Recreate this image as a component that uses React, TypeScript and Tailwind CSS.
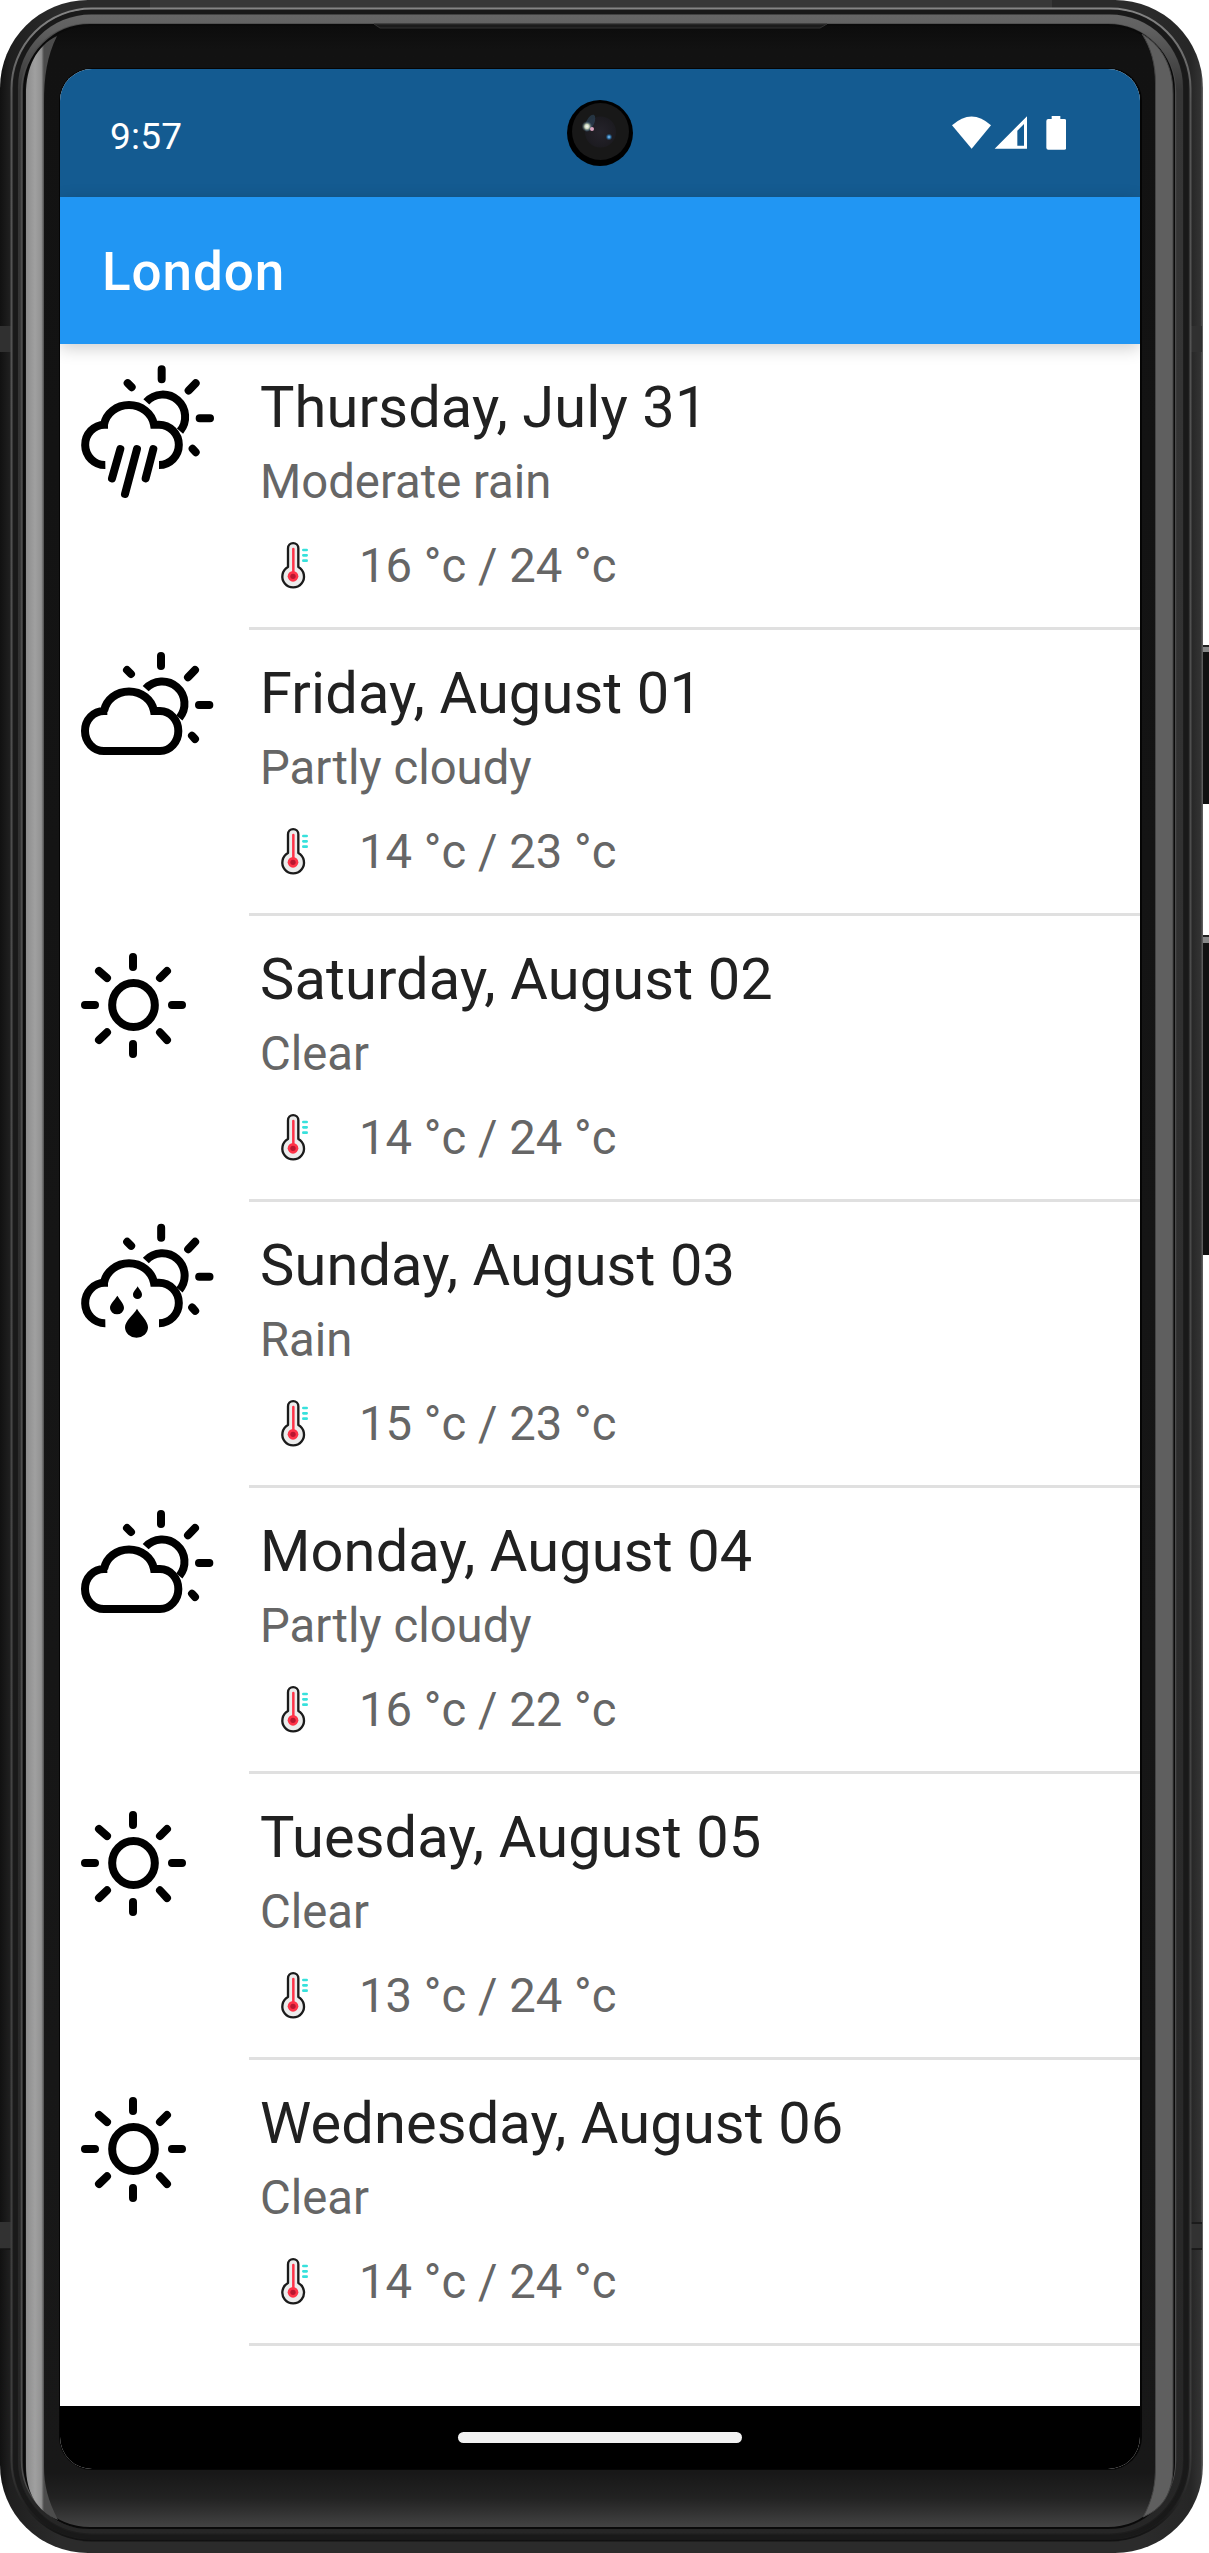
import React from "react";

type Kind = "rain-sun" | "cloudy" | "clear" | "drops";

const days: { day: string; text: string; temp: string; kind: Kind }[] = [
  { day: "Thursday, July 31", text: "Moderate rain", temp: "16 °c / 24 °c", kind: "rain-sun" },
  { day: "Friday, August 01", text: "Partly cloudy", temp: "14 °c / 23 °c", kind: "cloudy" },
  { day: "Saturday, August 02", text: "Clear", temp: "14 °c / 24 °c", kind: "clear" },
  { day: "Sunday, August 03", text: "Rain", temp: "15 °c / 23 °c", kind: "drops" },
  { day: "Monday, August 04", text: "Partly cloudy", temp: "16 °c / 22 °c", kind: "cloudy" },
  { day: "Tuesday, August 05", text: "Clear", temp: "13 °c / 24 °c", kind: "clear" },
  { day: "Wednesday, August 06", text: "Clear", temp: "14 °c / 24 °c", kind: "clear" },
];

function SunBehind() {
  return (
    <>
      <path d="M257 176A67 67 0 0 1 358 264" />
      <g strokeLinecap="round" strokeWidth="24">
        <path d="M303 78V108M384 142L405 120M417 225H448M201 120L213 132M396 317L405 327" />
      </g>
    </>
  );
}

function WeatherIcon({ kind }: { kind: Kind }) {
  if (kind === "clear")
    return (
      <svg className="block h-[150px] w-[150px] shrink-0" viewBox="0 -42 450 450" fill="none" stroke="#000" strokeWidth="24">
        <ellipse cx="220.500" cy="225" rx="64" ry="66" />
        <path
          strokeLinecap="round"
          d="M219 81V111M219 342V372M75 225H105M336 225H366M117 123L141 144M321 123L300 144M117 330L141 307M300 307L321 330"
        />
      </svg>
    );
  if (kind === "cloudy")
    return (
      <svg className="block h-[150px] w-[150px] shrink-0" viewBox="0 0 450 450" overflow="visible" fill="none" stroke="#000" strokeWidth="24">
        <SunBehind />
        <path d="M142 243H132A57 60 0 0 0 132 363H300A55 60 0 0 0 300 243H282A76 70 0 0 0 132 243" />
      </svg>
    );
  return (
    <svg
      className="block h-[150px] w-[150px] shrink-0"
      viewBox={kind === "drops" ? "0 6 450 450" : "0 12 450 450"}
      overflow="visible"
      fill="none"
      stroke="#000"
      strokeWidth="24"
    >
      <g transform={kind === "drops" ? "translate(0 5.500)" : "translate(0 11)"}>
        <g transform={kind === "drops" ? "translate(0.500 0)" : "translate(2 -1.500)"}>
          <SunBehind />
        </g>
        <path d="M144 243H134A59 60 0 0 0 136 364" />
        <path d="M132 243A76 70 0 0 1 282 243H297A59 60 0 0 1 297 364" />
      </g>
      {kind === "drops" ? (
        <g fill="#000" stroke="none">
          <path d="M172 287C164 300 150 312 150 324A21 19 0 0 0 192 324C192 312 180 300 172 287Z" />
          <path d="M233 259C228 269 219 275 219 284A13.500 13 0 0 0 246 284C246 275 238 269 233 259Z" />
          <path d="M231 326C220 346 195 362 195 382A34.500 31 0 0 0 264 382C264 362 242 346 231 326Z" />
        </g>
      ) : (
        <path strokeLinecap="round" d="M181 327L156 415M231 327L195 462M280 327L257 415" />
      )}
    </svg>
  );
}

function Thermometer() {
  return (
    <svg className="block h-[48px] w-[30px] shrink-0" viewBox="0 0 90 144" fill="none">
      <path
        d="M24 78V22A15.500 15.500 0 0 1 55 22V78A32.500 32.500 0 1 1 24 78Z"
        fill="#ececec"
        stroke="#1b1b1b"
        strokeWidth="7"
        strokeLinejoin="round"
      />
      <path d="M40 24V100" stroke="#ff3348" strokeWidth="7.500" strokeLinecap="round" />
      <circle cx="39" cy="106" r="16" fill="#ff3348" />
      <circle cx="39" cy="106" r="8" fill="#b9162f" />
      <path d="M70 27H80M70 43H80M70 59H80" stroke="#37e1dc" strokeWidth="8" strokeLinecap="round" />
    </svg>
  );
}

function Bezel() {
  return (
    <svg className="absolute inset-0 h-full w-full" viewBox="0 0 1209 2553" fill="none">
      <defs>
        <linearGradient id="body" x1="0" x2="1203" y1="0" y2="0" gradientUnits="userSpaceOnUse">
          <stop offset="0" stopColor="#111" />
          <stop offset=".008" stopColor="#1f1f1f" />
          <stop offset=".05" stopColor="#2b2b2b" />
          <stop offset=".95" stopColor="#2b2b2b" />
          <stop offset=".99" stopColor="#262626" />
          <stop offset=".998" stopColor="#333" />
          <stop offset="1" stopColor="#666" />
        </linearGradient>
        <linearGradient id="rim" x1="0" x2="0" y1="0" y2="2553" gradientUnits="userSpaceOnUse">
          <stop offset="0" stopColor="#8a8a8a" />
          <stop offset=".04" stopColor="#555" />
          <stop offset=".96" stopColor="#3c3c3c" />
          <stop offset="1" stopColor="#0c0c0c" />
        </linearGradient>
        <linearGradient id="inner" x1="0" x2="0" y1="14" y2="2553" gradientUnits="userSpaceOnUse">
          <stop offset="0" stopColor="#666" />
          <stop offset=".006" stopColor="#606060" />
          <stop offset=".03" stopColor="#363636" />
          <stop offset="1" stopColor="#262626" />
        </linearGradient>
        <linearGradient id="glass" x1="0" x2="0" y1="25" y2="2528" gradientUnits="userSpaceOnUse">
          <stop offset="0" stopColor="#0c0c0c" />
          <stop offset=".01" stopColor="#121212" />
          <stop offset=".978" stopColor="#181818" />
          <stop offset=".988" stopColor="#222" />
          <stop offset="1" stopColor="#444" />
        </linearGradient>
        <linearGradient id="leftBand" x1="26" x2="44" y1="0" y2="0" gradientUnits="userSpaceOnUse">
          <stop offset="0" stopColor="#8c8c8c" />
          <stop offset=".5" stopColor="#a0a0a0" />
          <stop offset=".85" stopColor="#929292" />
          <stop offset="1" stopColor="#4c4c4c" />
        </linearGradient>
      </defs>
      <rect x="1196" y="645" width="20" height="159" rx="2" fill="#111" />
      <rect x="1202" y="646" width="7" height="6" fill="#888" />
      <rect x="1202" y="645" width="7" height="2" fill="#222" />
      <rect x="1196" y="935" width="20" height="320" rx="2" fill="#111" />
      <rect x="1202" y="937" width="7" height="6" fill="#888" />
      <rect x="1202" y="935" width="7" height="2" fill="#222" />
      <rect width="1203" height="2553" rx="88" fill="url(#body)" />
      <path d="M150 0H1052V10H150Z" fill="#383838" />
      <path d="M0 326H11V352H0ZM1190 326H1202V352H1190Z" fill="#303030" />
      <path d="M0 2222H11V2249H0ZM1190 2222H1202V2249H1190Z" fill="#323232" />
      <path d="M0 2249H11M1190 2223H1202M1190 2249H1202" stroke="#151515" strokeWidth="1.500" />
      <rect x="11.500" y="8.500" width="1179" height="2532" rx="80" fill="#1d1d1d" stroke="url(#rim)" strokeWidth="2" />
      <rect x="15.500" y="12" width="1170.500" height="2525" rx="76" stroke="#191919" strokeWidth="4" />
      <rect x="18" y="14.500" width="1165" height="2519" rx="73" fill="url(#inner)" />
      <rect x="21.500" y="24" width="1154" height="2504" rx="68" fill="none" stroke="#4c4c4c" strokeWidth="1.500" />
      <rect x="24" y="25" width="1150" height="2503" rx="66" fill="url(#glass)" stroke="#0a0a0a" strokeWidth="2" />
      <path d="M374 24L380 28H820L827 24Z" fill="#1b1b1b" stroke="#333" strokeWidth="1" />
      <path d="M57 36C36 46 26 68 26 94V2466C26 2493 37 2511 58 2520C48 2500 44 2486 44 2466V104C44 76 47 56 57 36Z" fill="url(#leftBand)" />
      <path d="M1142 34C1162 46 1173 66 1173 94V2466C1173 2494 1162 2509 1143 2517C1153 2499 1155.500 2484 1155.500 2466V84C1155.500 64 1151 48 1142 34Z" fill="#5f5f5f" stroke="#444" strokeWidth="1" />
      <rect x="59" y="68" width="1083" height="2402" rx="33" fill="#050505" />
    </svg>
  );
}

function Camera() {
  return (
    <svg className="absolute left-[507px] top-[31px] h-[66px] w-[66px]" viewBox="0 0 66 66">
      <defs>
        <radialGradient id="lens">
          <stop offset="0" stopColor="#25232b" />
          <stop offset="1" stopColor="#1c1b20" />
        </radialGradient>
        <radialGradient id="glow">
          <stop offset="0" stopColor="#fff" />
          <stop offset=".4" stopColor="#c9d5b8" />
          <stop offset="1" stopColor="#31506a" stopOpacity="0" />
        </radialGradient>
        <radialGradient id="blueGlow">
          <stop offset="0" stopColor="#8fd0ff" />
          <stop offset=".4" stopColor="#3a83bd" />
          <stop offset="1" stopColor="#1f4b73" stopOpacity="0" />
        </radialGradient>
      </defs>
      <circle cx="33" cy="33" r="33" fill="#000" />
      <circle cx="33.500" cy="31.500" r="28.500" fill="#181818" />
      <circle cx="33.500" cy="32" r="15.500" fill="url(#lens)" />
      <ellipse cx="23" cy="23" rx="4" ry="9" fill="#31506a" opacity=".5" transform="rotate(25 23 23)" />
      <circle cx="20" cy="26.500" r="5.500" fill="url(#glow)" />
      <circle cx="25" cy="29" r="2" fill="#d9a5c0" />
      <circle cx="42" cy="37" r="3.500" fill="url(#blueGlow)" />
    </svg>
  );
}

export default function App() {
  return (
    <div className="relative h-[2553px] w-[1209px] overflow-hidden bg-white pl-[60px] pt-[69px] font-[Roboto,sans-serif]">
      <Bezel />
      <div className="relative flex h-[2400px] w-[1080px] flex-col overflow-hidden rounded-[32px] bg-white">
        <header className="relative flex h-[128px] shrink-0 items-center justify-between bg-[#145b91] pl-[50px] pr-[74px] text-white">
          <span className="mt-[6px] text-[37px] leading-none tracking-[0.2px]">9:57</span>
          <Camera />
          <svg className="h-[36px] w-[117px]" viewBox="0 0 351 108" fill="#fff">
            <path d="M9 31Q68 -22 126 31L68 101Z" />
            <path fillRule="evenodd" d="M137 101L234 4V101ZM205 47V92H225V27Z" />
            <path d="M308 3H334V12H346Q352 12 352 18V98Q352 104 346 104H298Q292 104 292 98V18Q292 12 298 12H308Z" />
          </svg>
        </header>
        <div className="relative z-10 flex h-[147px] shrink-0 items-center bg-[#2196f3] pl-[42px] pt-[4px] shadow-[0_4px_16px_rgba(0,0,0,0.2)]">
          <h1 className="text-[53px] font-medium leading-none tracking-[0.9px] text-white">London</h1>
        </div>
        <main className="flex-1">
          {days.map((d) => (
            <section key={d.day} className="flex h-[286px]">
              <WeatherIcon kind={d.kind} />
              <div className="ml-[39px] flex flex-1 flex-col border-b-[3px] border-[#e0e0e0] pl-[11px] pt-[28px]">
                <h2 className="whitespace-nowrap text-[57.75px] leading-[70px] tracking-[0.13px] text-[#212121]">{d.day}</h2>
                <p className="mt-[10px] whitespace-nowrap text-[47.25px] leading-[60px] text-[#666]">{d.text}</p>
                <div className="mt-[24px] flex h-[60px] items-center pl-[20px]">
                  <div className="-mt-[2px]">
                    <Thermometer />
                  </div>
                  <span className="ml-[49px] whitespace-nowrap text-[47.25px] leading-[60px] text-[#666]">{d.temp}</span>
                </div>
              </div>
            </section>
          ))}
        </main>
        <footer className="flex h-[63px] shrink-0 items-center justify-center bg-black">
          <div className="h-[11px] w-[284px] rounded-full bg-[#f2f2f2]" />
        </footer>
      </div>
    </div>
  );
}
